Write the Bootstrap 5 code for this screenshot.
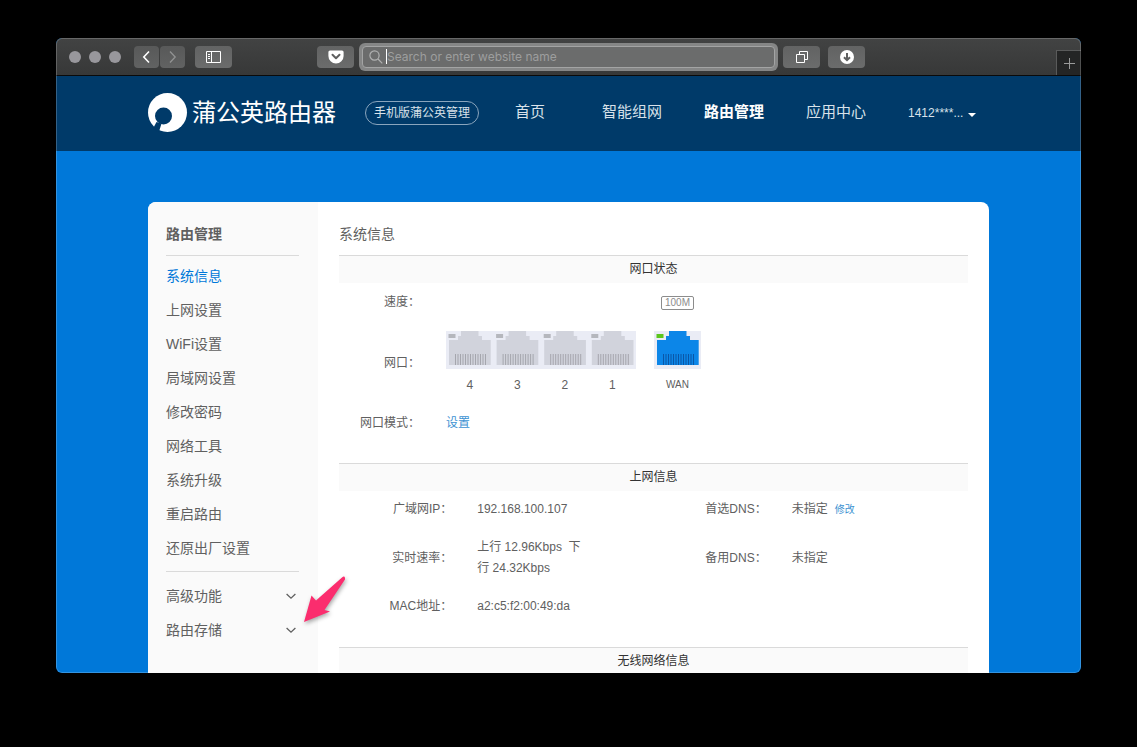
<!DOCTYPE html>
<html lang="zh-CN">
<head>
<meta charset="utf-8">
<meta name="viewport" content="width=device-width, initial-scale=1">
<title>蒲公英路由器</title>
<link href="https://cdn.jsdelivr.net/npm/bootstrap@5.3.0/dist/css/bootstrap.min.css" rel="stylesheet">
<style>
  body { background: #000; font-family: "Liberation Sans", "Noto Sans CJK SC", sans-serif; font-size: 12px; line-height: 21px; color: #606060; padding: 38px 56px 74px; height: 100vh; }
  a { text-decoration: none; }

  .browser { background: #0078d9; border-radius: 6px; }
  .browser::after { content: ""; position: absolute; inset: 0; border: 1px solid rgba(255,255,255,.2); border-radius: inherit; pointer-events: none; }

  .toolbar { height: 38px; padding-left: 13px; background: linear-gradient(#424343, #373838); border-bottom: 1px solid #0a0a0a; }
  .dot { width: 12px; height: 12px; border-radius: 50%; background: #98979c; }
  .history { gap: 1px; margin: 0 10px 0 13px; }
  .tool { width: 37px; height: 22px; border: 0; border-radius: 4px; padding: 0; background: linear-gradient(#626363, #6b6c6c); color: #fff; }
  .tool-half { width: 25px; background: linear-gradient(#585959, #616262); }
  .toolbar-centre { margin: 0 191px 0 85px; }
  .address { height: 28px; margin: 0 5px; padding: 3px; border-radius: 6px; background: #858686; }
  .address label { height: 22px; padding-left: 6px; border: 1px solid #a3a4a4; border-radius: 4px; background: #6b6c6c; }
  .address input { min-width: 0; border: 0; outline: 0; padding: 0; background: transparent; color: #fff; font: 12px "Inter", sans-serif; }
  .address input::placeholder { color: #9d9e9e; opacity: 1; }
  .caret { width: 1px; height: 15px; margin-left: 3px; background: #fff; }
  .newtab { width: 25px; height: 25px; border: 1px solid #5a5b5b; border-width: 1px 0 0 1px; padding: 0; background: #242525; color: #9a9b9b; }

  .site-head { height: 75px; padding: 0 92px 2px; background: #003a69; }
  .site-head a { color: #d9e2ea; }
  .site-head .brand { color: #fff; font-size: 24px; line-height: 36px; }
  .pill { height: 24px; line-height: 22px; padding: 0 8px; margin-left: 29px; border: 1px solid #8aa5bd; border-radius: 12px; }
  .site-nav { padding-bottom: 2px; }
  .site-nav a { width: 102px; font-size: 15px; line-height: 24px; }
  .site-nav .active { color: #fff; font-weight: 700; }
  .user { margin-left: 21px; line-height: 24px; }
  .user svg { margin: 4px 0 0 5px; }

  .page-area { padding: 51px 92px 0; min-height: 0; }
  .panel { border-radius: 8px 8px 0 0; background: #fff; }
  .side { width: 170px; padding: 0 19px 0 18px; background: #fafafa; border-top-left-radius: 8px; z-index: 1; }
  .title { font-size: 14px; line-height: 22px; padding: 21px 0 10px; margin: 0; }
  .side .title { font-weight: 700; border-bottom: 1px solid #dadada; }
  .side ul { padding: 3px 0 6px; }
  .side ul + ul { border-top: 1px solid #dadada; padding-top: 7px; }
  .side li a { color: #606060; font-size: 14px; line-height: 34px; height: 34px; }
  .side li a.active { color: #0078d9; }
  .chevron { margin-right: 3px; }
  .pointer { position: absolute; right: -49px; bottom: 22px; filter: drop-shadow(1px 2px 2px rgba(0,0,0,.35)); }

  .main { padding: 0 21px; }
  .main .title { font-weight: 400; }
  .band { font-size: 12px; line-height: 27px; font-weight: 400; border-top: 1px solid #dadada; background: #fafafa; color: #333; margin: 0; }
  .main a { color: #3d92d2; }

  .ports { display: grid; grid-template-columns: 81px 198px 47px; column-gap: 18px; align-items: center; padding: 1px 0 29px; }
  .tag { text-align: right; }
  .field { margin-left: 8px; }
  .speed-row { height: 37px; margin-bottom: 10px; }
  .mode-row { padding-top: 18px; }
  .speed { font-size: 10px; line-height: 12px; padding: 0 3px; border: 1px solid #8c8c8c; border-radius: 2px; color: #8c8c8c; }
  .port-name { line-height: 20px; padding-top: 6px; }
  .wan-name { font-size: 10px; }

  .facts { table-layout: fixed; margin-bottom: 22px; }
  .facts th { width: 18%; font-weight: 400; text-align: right; padding: 8px 0; }
  .facts td { width: 22%; padding: 8px 0 8px 25px; }
  .facts th ~ th { width: 28%; }
  .facts td:last-child { width: auto; }
  .facts .tall > * { padding-top: 9px; padding-bottom: 9px; }
  .facts .edit { font-size: 10px; margin-left: 7px; }
</style>
</head>
<body>
<div class="browser position-relative overflow-hidden h-100 d-flex flex-column">

  <div class="toolbar d-flex align-items-center flex-shrink-0">
    <div class="d-flex gap-2"><span class="dot"></span><span class="dot"></span><span class="dot"></span></div>
    <div class="history d-flex">
      <button class="tool tool-half d-flex align-items-center justify-content-center" aria-label="Back"><svg width="9" height="14" fill="none" stroke="#fff" stroke-width="1.6"><path d="M7 1.5 1.8 7 7 12.5"/></svg></button>
      <button class="tool tool-half d-flex align-items-center justify-content-center" aria-label="Forward"><svg width="9" height="14" fill="none" stroke="#929393" stroke-width="1.3"><path d="M2 1.5 7.2 7 2 12.5"/></svg></button>
    </div>
    <button class="tool d-flex align-items-center justify-content-center" aria-label="Sidebar"><svg width="16" height="12" fill="none" stroke="#fff"><path d="M.5.5h14v11H.5zM5.5.5v11M2 3.5h2M2 5.5h2M2 7.5h2"/></svg></button>
    <div class="toolbar-centre d-flex align-items-center flex-grow-1">
      <button class="tool d-flex align-items-center justify-content-center flex-shrink-0" aria-label="Pocket"><svg width="16" height="14"><path d="M2 .5h12q1.600 0 1.600 1.600V6a7.600 7.600 0 0 1-15.200 0V2.100Q.4.5 2 .5z" fill="#fff"/><path d="m4.500 4.800 3.500 3.400 3.500-3.400" fill="none" stroke="#5f6060" stroke-width="2" stroke-linecap="round" stroke-linejoin="round"/></svg></button>
      <div class="address flex-grow-1">
        <label class="d-flex align-items-center">
          <svg width="14" height="14" fill="none" stroke="#b0b1b1" stroke-width="1.2"><circle cx="5.5" cy="5.5" r="4.6"/><path d="m9 9 4.300 4.300"/></svg>
          <span class="caret"></span>
          <input class="flex-grow-1" type="text" placeholder="Search or enter website name" aria-label="Address">
        </label>
      </div>
      <button class="tool d-flex align-items-center justify-content-center flex-shrink-0 me-2" aria-label="Tabs"><svg width="14" height="14" fill="none" stroke="#fff"><path d="M1.500 4.500h8v8h-8zM4.500 4.500v-3h8v8h-3"/></svg></button>
      <button class="tool d-flex align-items-center justify-content-center flex-shrink-0" aria-label="Downloads"><svg width="14" height="14"><circle cx="7" cy="7" r="7" fill="#fff"/><path d="M7 3v7M4 7.200l3 3 3-3" fill="none" stroke="#5f6060" stroke-width="2"/></svg></button>
    </div>
    <button class="newtab align-self-end d-flex align-items-center justify-content-center flex-shrink-0" aria-label="New tab"><svg width="11" height="11" stroke="currentColor"><path d="M5.500 0v11M0 5.500h11"/></svg></button>
  </div>

  <header class="site-head d-flex align-items-center flex-shrink-0">
    <a class="brand d-flex align-items-center text-nowrap" href="#">
      <svg class="me-1" width="40" height="40"><circle cx="19.500" cy="19.500" r="19.500" fill="#fff"/><circle cx="15.500" cy="23" r="8.500" fill="#003a69"/><path d="m8.500 29 5 1.500-2.800 9L5 35.500z" fill="#003a69"/></svg>
      蒲公英路由器
    </a>
    <a class="pill text-nowrap" href="#">手机版蒲公英管理</a>
    <nav class="site-nav d-flex text-center">
      <a href="#">首页</a><a href="#">智能组网</a><a class="active" href="#">路由管理</a><a href="#">应用中心</a>
    </nav>
    <a class="user text-nowrap d-flex align-items-center" href="#">1412****...<svg width="8" height="4"><path d="M0 0h8L4 4z" fill="#fff"/></svg></a>
  </header>

  <div class="page-area flex-grow-1 d-flex">
    <div class="panel d-flex flex-grow-1">
      <aside class="side position-relative flex-shrink-0">
        <h2 class="title">路由管理</h2>
        <ul class="list-unstyled m-0">
          <li><a class="d-block active" href="#">系统信息</a></li>
          <li><a class="d-block" href="#">上网设置</a></li>
          <li><a class="d-block" href="#">WiFi设置</a></li>
          <li><a class="d-block" href="#">局域网设置</a></li>
          <li><a class="d-block" href="#">修改密码</a></li>
          <li><a class="d-block" href="#">网络工具</a></li>
          <li><a class="d-block" href="#">系统升级</a></li>
          <li><a class="d-block" href="#">重启路由</a></li>
          <li><a class="d-block" href="#">还原出厂设置</a></li>
        </ul>
        <ul class="list-unstyled m-0">
          <li><a class="d-flex align-items-center justify-content-between" href="#">高级功能<svg class="chevron" width="10" height="7" fill="none" stroke="#606060" stroke-width="1.3"><path d="M.6 1 5 5.200 9.400 1"/></svg></a></li>
          <li class="position-relative"><a class="d-flex align-items-center justify-content-between" href="#">路由存储<svg class="chevron" width="10" height="7" fill="none" stroke="#606060" stroke-width="1.3"><path d="M.6 1 5 5.200 9.400 1"/></svg></a>
            <svg class="pointer" width="46" height="50"><path d="M2 47 9.500 20.500l4.500 5L40 2.500q2.500-2 3 .5v1.500L22.500 35l5.500 1.500z" fill="#fb2d6e"/></svg>
          </li>
        </ul>
      </aside>

      <main class="main flex-grow-1">
        <h1 class="title">系统信息</h1>
        <h3 class="band text-center">网口状态</h3>
        <div class="ports">
          <div class="tag speed-row d-flex align-items-center justify-content-end">速度：</div>
          <div></div>
          <div class="speed-row d-flex align-items-center justify-content-center"><span class="speed">100M</span></div>

          <div class="tag">网口：</div>
          <div class="field text-center">
            <svg class="d-block w-100" height="38" viewBox="0 0 190 38">
              <defs>
                <path id="jack" d="M3 9h9V5h3V0h17.500v5H36v4h8.700v25H3z"/>
                <path id="pins" d="M9.500 23v11m2.500-11v11m2.500-11v11m2.500-11v11m2.500-11v11m2.500-11v11m2.500-11v11m2.500-11v11m2.500-11v11m2.500-11v11m2.500-11v11m2.500-11v11m2.500-11v11"/>
                <path id="led" d="M2.500 3H9.500V7H2.500z"/>
              </defs>
              <rect width="190" height="38" fill="#eaecf5"/>
              <g fill="#d1d3dc"><use href="#jack"/><use href="#jack" x="47.600"/><use href="#jack" x="95.200"/><use href="#jack" x="142.800"/></g>
              <g stroke="#a5a6ad"><use href="#pins"/><use href="#pins" x="47.600"/><use href="#pins" x="95.200"/><use href="#pins" x="142.800"/></g>
              <g fill="#b5b7bd"><use href="#led"/><use href="#led" x="47.600"/><use href="#led" x="95.200"/><use href="#led" x="142.800"/></g>
            </svg>
            <div class="port-name d-flex"><span class="col">4</span><span class="col">3</span><span class="col">2</span><span class="col">1</span></div>
          </div>
          <div class="text-center">
            <svg class="d-block w-100" height="38" viewBox="0 0 47 38"><rect width="47" height="38" fill="#eaecf5"/><use href="#jack" fill="#0c86e8"/><use href="#pins" stroke="#0a56a6"/><use href="#led" fill="#5cc61c"/></svg>
            <div class="port-name wan-name">WAN</div>
          </div>

          <div class="tag mode-row">网口模式：</div>
          <div class="field mode-row"><a href="#">设置</a></div>
        </div>

        <h3 class="band text-center">上网信息</h3>
        <table class="facts w-100">
          <tr><th scope="row">广域网IP：</th><td>192.168.100.107</td><th scope="row">首选DNS：</th><td>未指定<a class="edit" href="#">修改</a></td></tr>
          <tr class="tall"><th scope="row">实时速率：</th><td>上行 12.96Kbps&nbsp; 下行 24.32Kbps</td><th scope="row">备用DNS：</th><td>未指定</td></tr>
          <tr><th scope="row">MAC地址：</th><td>a2:c5:f2:00:49:da</td><td></td><td></td></tr>
        </table>

        <h3 class="band text-center">无线网络信息</h3>
      </main>
    </div>
  </div>
</div>
<script src="https://cdn.jsdelivr.net/npm/bootstrap@5.3.0/dist/js/bootstrap.bundle.min.js"></script>
</body>
</html>
